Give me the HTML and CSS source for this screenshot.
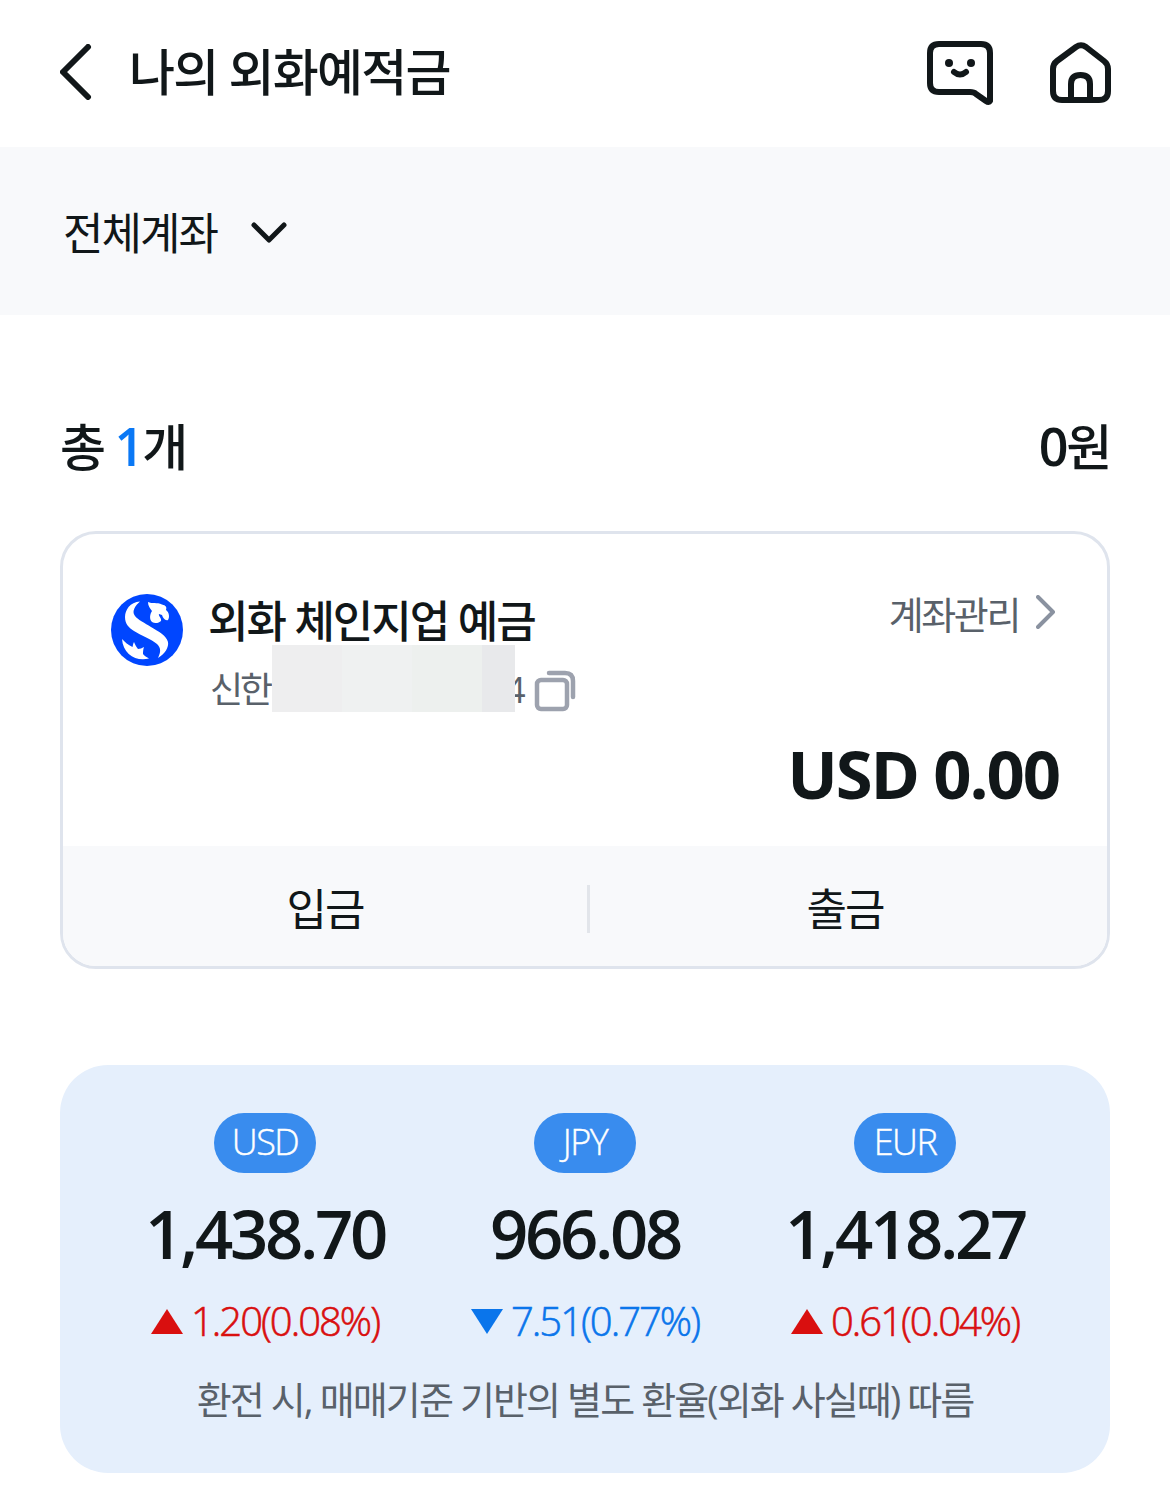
FILE: index.html
```html
<!DOCTYPE html>
<html lang="ko">
  <head>
    <meta charset="UTF-8" />
    <meta name="viewport" content="width=device-width, initial-scale=1.0" />
    <title>나의 외화예적금</title>
    <link rel="stylesheet" href="styles.css">
  </head>
  <body>
    <header class="header">
      <svg class="icon-back" viewBox="0 0 32 56">
        <path d="M28 3 L3 28 L28 53" />
      </svg>
      <h1>나의 외화예적금</h1>
      <svg class="icon-chat" viewBox="0 0 68 66">
        <path d="M12 3 H54 Q63 3 63 12 V60 Q62 62 59 60 L49 53 Q47 51 43 51 H12 Q3 51 3 42 V12 Q3 3 12 3 Z" />
        <path d="M27 31 Q33 36 39 31" />
        <circle cx="22" cy="22" r="4" />
        <circle cx="44" cy="22" r="4" />
      </svg>
      <svg class="icon-home" viewBox="0 0 62 62">
        <path d="M26 5 Q31 1.500 36 5 L54 19 Q58 22 58 27 V49 Q58 58 49 58 H12 Q3 58 3 49 V27 Q3 22 7 19 Z" />
        <path d="M21 58 V42 Q21 33 30.500 33 Q40 33 40 42 V58" />
      </svg>
    </header>

    <div class="filter">
      <span>전체계좌</span>
      <svg class="icon-down" viewBox="0 0 36 22">
        <path d="M3 3 L18 18 L33 3" />
      </svg>
    </div>

    <main>
      <div class="summary">
        <span>총 <b class="count">1</b>개</span>
        <span><b>0</b>원</span>
      </div>

      <section class="account">
        <div class="account-info">
          <svg class="logo" viewBox="0 0 72 72">
            <circle cx="36" cy="36" r="36" fill="#0046ff" />
            <path fill="#fff" d="M29 7.500 C19 8 14 16 14 23 C14 30 18 34 23 37 C31 42 40 45 46 50 C50 54 50 58 47 64 C54 60 58 53 57 48 C55 41 48 38 40 33 C34 29 27 26 24 22 C20 17 25 11 29 7.500 Z" />
            <path fill="#fff" d="M37 8 C41 10 46 8 51 10.500 C55 11.500 56 13 55 16 C58 18 59 23 57 26 C54 27 52 24 51 21 L48 20 C47 22 51 24 50 27 C48 29 44 30 41 28 C38 25 39 20 41 17 C39 14 37 12 37 8 Z" />
            <path fill="#fff" d="M11 45 C14 48 17 51 21.500 53 C22 51 22 50 23 48 C24 50 25 53 27 55 C29 55 31 54 33 53 C32 56 32 58 32 60 C33 62 36 63 38 64.500 C25 68 12 60 11 45 Z" />
          </svg>
          <div class="account-text">
            <h2>외화 체인지업 예금</h2>
            <div class="account-number">
              <span class="bank">신한</span>
              <span class="mask"><i></i><i></i><i></i><i></i></span>
              <span class="last">4</span>
              <svg class="icon-copy" viewBox="0 0 42 42">
                <rect x="3" y="10" width="30" height="29" rx="4" />
                <path d="M15 3 H31 Q39 3 39 11 V27" />
              </svg>
            </div>
          </div>
          <div class="manage">
            <span>계좌관리</span>
            <svg class="icon-right" viewBox="0 0 20 34">
              <path d="M2 2 L17 17 L2 32" />
            </svg>
          </div>
        </div>
        <div class="balance">USD 0.00</div>
        <div class="actions">
          <span class="action">입금</span>
          <span class="divider"></span>
          <span class="action">출금</span>
        </div>
      </section>

      <section class="rates">
        <div class="rate-list">
          <div class="rate">
            <span class="badge">USD</span>
            <strong>1,438.70</strong>
            <span class="change up"><svg viewBox="0 0 32 25"><path d="M16 0 L32 25 H0 Z" /></svg>1.20(0.08%)</span>
          </div>
          <div class="rate">
            <span class="badge">JPY</span>
            <strong>966.08</strong>
            <span class="change down"><svg viewBox="0 0 32 25"><path d="M0 0 H32 L16 25 Z" /></svg>7.51(0.77%)</span>
          </div>
          <div class="rate">
            <span class="badge">EUR</span>
            <strong>1,418.27</strong>
            <span class="change up"><svg viewBox="0 0 32 25"><path d="M16 0 L32 25 H0 Z" /></svg>0.61(0.04%)</span>
          </div>
        </div>
        <p class="note">환전 시, 매매기준 기반의 별도 환율(외화 사실때) 따름</p>
      </section>
    </main>
  </body>
</html>
```

FILE: styles.css
```css
* {
  box-sizing: border-box;
}
body {
  margin: 0;
  font-family: "Open Sans", "Noto Sans CJK KR", sans-serif;
  background-color: #fff;
  color: #111719;
  white-space: nowrap;
}
h1,
h2,
p {
  margin: 0;
}
svg {
  display: block;
  flex-shrink: 0;
  fill: none;
  stroke-linecap: round;
  stroke-linejoin: round;
}

/* Header */
.header {
  display: flex;
  align-items: center;
  height: 147px;
  padding: 0 58px 3px 60px;
  stroke: #111719;
  stroke-width: 6;
}
.header h1 {
  margin-left: 37px;
  font-size: 50px;
  font-weight: 500;
  line-height: 70px;
  letter-spacing: -1.8px;
  stroke: none;
}
.icon-back {
  width: 32px;
  height: 56px;
}
.icon-chat {
  width: 68px;
  height: 66px;
  margin-top: 3px;
  margin-left: auto;
}
.icon-chat circle {
  fill: #111719;
  stroke: none;
}
.icon-home {
  width: 62px;
  height: 62px;
  margin-top: 1px;
  margin-left: 55px;
}

/* Account filter */
.filter {
  display: flex;
  align-items: center;
  height: 168px;
  padding: 0 63px;
  background-color: #f8f9fb;
  font-size: 44px;
  letter-spacing: -2px;
}
.icon-down {
  width: 36px;
  height: 22px;
  margin-top: 4px;
  margin-left: 34px;
  stroke: #111719;
  stroke-width: 5;
}

main {
  padding: 0 60px;
}
.summary {
  display: flex;
  justify-content: space-between;
  padding-top: 96px;
  font-size: 50px;
  font-weight: 500;
  line-height: 72px;
  letter-spacing: -2.2px;
}
.summary b {
  font-size: 52px;
  font-weight: 600;
  line-height: 1;
}
.summary .count {
  color: #0a78f5;
}

/* Account card */
.account {
  height: 438px;
  margin-top: 48px;
  border: 3px solid #dfe4ed;
  border-radius: 36px;
  overflow: hidden;
}
.account-info {
  display: flex;
  height: 198px;
  padding: 60px 51px 0 48px;
}
.logo {
  width: 72px;
  height: 72px;
}
.account-text {
  margin-left: 25px;
}
.account-text h2 {
  height: 51px;
  font-size: 44px;
  font-weight: 500;
  line-height: 54px;
  letter-spacing: -2px;
}
.account-number {
  display: flex;
  height: 67px;
  color: #59616a;
  font-size: 36px;
  line-height: 90px;
  letter-spacing: -3px;
}
.bank {
  width: 64px;
  padding-left: 2px;
}
.mask {
  z-index: 1;
  display: flex;
  width: 243px;
  height: 67px;
}
.mask i {
  width: 70px;
  background-color: #eeeeef;
}
.mask i:nth-child(2) {
  background-color: #eff1f1;
}
.mask i:nth-child(3) {
  background-color: #edf0ee;
}
.mask i:nth-child(4) {
  width: 33px;
  background-color: #e8e9eb;
}
.last {
  width: 20px;
  margin-left: -10px;
}
.icon-copy {
  width: 42px;
  height: 42px;
  margin: 25px 0 0 9px;
  stroke: #9da2ae;
  stroke-width: 4.5;
}
.manage {
  display: flex;
  height: 36px;
  align-items: center;
  margin-left: auto;
  color: #59616a;
  font-size: 38px;
  letter-spacing: -2.4px;
}
.icon-right {
  width: 20px;
  height: 34px;
  margin-left: 17px;
  stroke: #8a92a0;
  stroke-width: 4;
}
.balance {
  height: 114px;
  padding-right: 48px;
  font-size: 67px;
  font-weight: 700;
  line-height: 83px;
  letter-spacing: -2.1px;
  text-align: right;
}
.actions {
  display: flex;
  align-items: center;
  height: 120px;
  padding-top: 5px;
  background-color: #f8f9fb;
}
.action {
  flex: 1;
  font-size: 44px;
  line-height: 48px;
  letter-spacing: -2px;
  text-align: center;
}
.action:first-child {
  flex: 0 0 524px;
}
.action:last-child {
  padding-right: 7px;
}
.divider {
  width: 3px;
  height: 48px;
  background-color: #e2e5ea;
}

/* Exchange rates */
.rates {
  height: 408px;
  margin-top: 96px;
  padding: 48px 45px 0;
  border-radius: 48px;
  background-color: #e5effc;
}
.rate-list {
  display: grid;
  grid-template-columns: repeat(3, 1fr);
}
.rate {
  display: flex;
  flex-direction: column;
  align-items: center;
}
.badge {
  width: 102px;
  height: 60px;
  border-radius: 30px;
  background-color: #398cee;
  color: #fff;
  font-size: 36px;
  font-weight: 300;
  line-height: 58px;
  letter-spacing: -1.5px;
  text-align: center;
  -webkit-text-stroke: 0.4px;
}
.rate strong {
  margin-top: 20px;
  font-size: 67px;
  font-weight: 600;
  line-height: 80px;
  letter-spacing: -3.3px;
}
.change {
  display: flex;
  align-items: center;
  margin-top: 23px;
  font-size: 40px;
  font-weight: 300;
  line-height: 50px;
  letter-spacing: -2px;
  -webkit-text-stroke: 0.6px;
}
.change svg {
  width: 32px;
  height: 25px;
  margin-right: 8px;
  fill: currentColor;
}
.up {
  color: #d90f0f;
}
.down {
  color: #0a75eb;
}
.note {
  margin-top: 25px;
  color: #59616a;
  font-size: 38px;
  line-height: 56px;
  letter-spacing: -1.9px;
  text-align: center;
}
```
